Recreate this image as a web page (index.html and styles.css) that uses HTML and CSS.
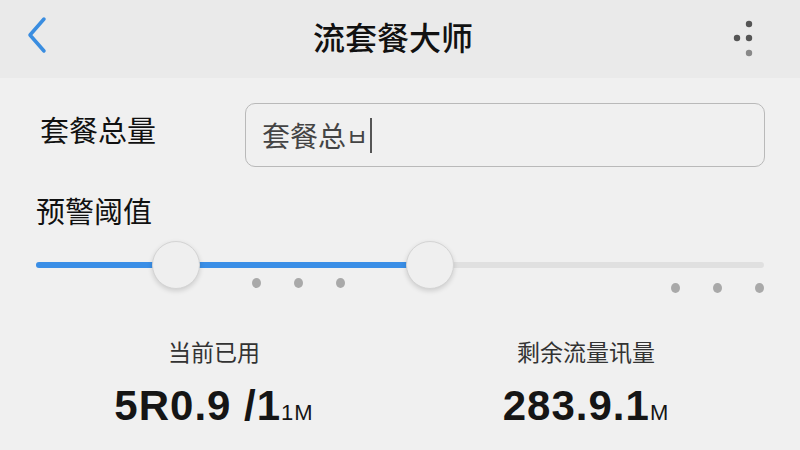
FILE: index.html
```html
<!DOCTYPE html>
<html lang="zh-CN">
<head>
    <meta charset="UTF-8">
    <meta name="viewport" content="width=device-width, initial-scale=1.0">
    <title>流套餐大师</title>
    <link rel="stylesheet" href="styles.css">
</head>
<body>
    <header class="nav-bar">
        <svg class="back-icon" width="24" height="40" viewBox="0 0 24 40">
            <path d="M18 4 L4 20 L18 36" fill="none" stroke="#3a8de0" stroke-width="3.5" stroke-linecap="round" stroke-linejoin="round"/>
        </svg>
        <h1 class="nav-title">流套餐大师</h1>
        <svg class="more-icon" width="30" height="40" viewBox="0 0 30 40">
            <circle cx="19" cy="6" r="3.2" fill="#555"/>
            <circle cx="7" cy="20" r="3.2" fill="#555"/>
            <circle cx="19" cy="20" r="3.2" fill="#555"/>
            <circle cx="19" cy="35" r="3.2" fill="#888"/>
        </svg>
    </header>

    <main class="content">
        <div class="field-row">
            <label for="total" class="field-label">套餐总量</label>
            <div class="input-box" id="total">
                <span class="input-text">套餐总</span><span class="caret">ㅂ</span>
            </div>
        </div>

        <div class="field-label warn-label">预警阈值</div>

        <div class="slider">
            <div class="track">
                <div class="track-fill" style="width: 54%"></div>
            </div>
            <div class="thumb thumb-low"></div>
            <div class="thumb thumb-high"></div>
        </div>
        <div class="ticks">
            <div class="tick-group"><span></span><span></span><span></span></div>
            <div class="tick-group tick-group-end"><span></span><span></span><span></span></div>
        </div>

        <div class="stats">
            <div class="stat">
                <div class="stat-label">当前已用</div>
                <div class="stat-value">5R0.9 /1<small>1M</small></div>
            </div>
            <div class="stat">
                <div class="stat-label">剩余流量讯量</div>
                <div class="stat-value">283.9.1<small>M</small></div>
            </div>
        </div>
    </main>
</body>
</html>
```

FILE: styles.css
```css
body {
    margin: 0;
    background-color: #f0f0f0;
    font-family: "Noto Sans CJK SC", "Noto Sans", sans-serif;
    color: #111;
    width: 800px;
    height: 450px;
    overflow: hidden;
}
.nav-bar {
    height: 78px;
    background-color: #eaeaea;
    display: grid;
    grid-template-columns: 1fr auto 1fr;
    align-items: center;
    padding: 0 40px 0 26px;
}
.back-icon {
    margin-top: -8px;
}
.nav-title {
    margin: -6px 0 0 0;
    font-size: 32px;
    font-weight: 500;
}
.more-icon {
    justify-self: end;
    margin-top: -2px;
}
.content {
    padding: 0 36px;
}
.field-row {
    display: flex;
    align-items: center;
    margin-top: 25px;
}
.field-label {
    font-size: 29px;
    font-weight: 400;
    width: 205px;
    padding-left: 4px;
}
.field-row .field-label {
    margin-top: -12px;
}
.input-box {
    flex: 1;
    height: 62px;
    margin-right: -1px;
    border: 1.5px solid #b9b9b9;
    border-radius: 10px;
    display: flex;
    align-items: center;
    padding-left: 16px;
    font-size: 28px;
    color: #444;
}
.caret {
    border-right: 2px solid #555;
    padding-right: 2px;
    font-size: 24px;
}
.warn-label {
    margin-top: 22px;
    padding-left: 0;
}
.slider {
    position: relative;
    height: 48px;
    margin-top: 7px;
}
.track {
    position: absolute;
    left: 0;
    right: 0;
    top: 24px;
    height: 6px;
    border-radius: 3px;
    background-color: #e0e0e0;
}
.track-fill {
    height: 100%;
    border-radius: 3px;
    background-color: #3a8ee6;
}
.thumb {
    position: absolute;
    top: 3px;
    width: 46px;
    height: 46px;
    border-radius: 50%;
    background-color: #efefef;
    border: 1px solid #d4d4d4;
    box-shadow: 0 2px 5px rgba(0, 0, 0, 0.15);
}
.thumb-low {
    left: 116px;
}
.thumb-high {
    left: 370px;
}
.ticks {
    display: flex;
    justify-content: space-between;
    margin-top: -8px;
    padding: 0 0 0 216px;
}
.tick-group {
    display: flex;
    gap: 33px;
}
.tick-group-end {
    margin-top: 5px;
}
.tick-group span {
    width: 9px;
    height: 10px;
    border-radius: 50%;
    background-color: #a9a9a9;
}
.stats {
    display: grid;
    grid-template-columns: 1fr 1fr;
    margin: 41px -8px 0 -8px;
}
.stat {
    text-align: center;
}
.stat-label {
    font-size: 23px;
    color: #333;
}
.stat-value {
    margin-top: 14px;
    font-family: "Liberation Sans", Arial, sans-serif;
    font-weight: 700;
    font-size: 42px;
    color: #151515;
    letter-spacing: 1px;
}
.stat-value small {
    font-size: 22px;
    font-weight: 400;
}
```
